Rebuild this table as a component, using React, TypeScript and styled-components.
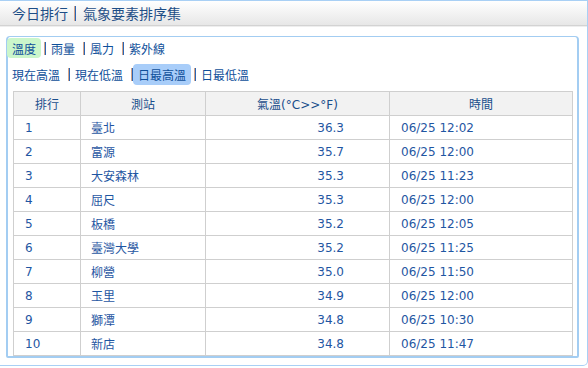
import React from 'react'
import styled, { createGlobalStyle } from 'styled-components'

const GlobalStyle = createGlobalStyle`
  html, body {
    margin: 0;
    padding: 0;
    background: #fff;
  }
  body {
    font-family: "DejaVu Sans", Verdana, "Noto Sans CJK TC", sans-serif;
    font-size: 12px;
    color: #1b4f92;
  }
`

const Frame = styled.div`
  box-sizing: border-box;
  width: 588px;
  height: 366px;
  border: 1px solid #a9d0f5;
  border-left: none;
  border-bottom-right-radius: 5px;
`

const TitleBar = styled.div`
  height: 24px;
  display: flex;
  align-items: center;
  padding-left: 12px;
  background: linear-gradient(#ffffff, #e7e7e7);
  border-bottom: 1px solid #d3d3d3;
  box-shadow: 0 1px 0 #eeeeee;
  font-size: 14px;
  color: #1d4d86;
`

const Sep = styled.span<{ $h?: number }>`
  display: inline-block;
  flex: none;
  width: 2px;
  height: ${p => p.$h ?? 13}px;
  margin-left: 3px;
  background: linear-gradient(90deg, #d6a488 50%, #2a66b5 50%);
`

const TitleSep = styled(Sep)`
  margin: 0 7px 0 6px;
`

const Panel = styled.div`
  margin: 10px 8px 0 6px;
  border: 2px solid #a3cdf2;
  border-top-width: 1px;
  border-radius: 4px 4px 2px 2px;
  padding: 0 5px 0 0;
`

const TabRow = styled.div<{ $mt: number; $h: number }>`
  display: flex;
  align-items: center;
  margin-top: ${p => p.$mt}px;
  height: ${p => p.$h}px;
  margin-left: -1px;
`

const Tab = styled.span<{ $active?: string }>`
  display: flex;
  align-items: center;
  height: 100%;
  padding: 0 5px;
  border-radius: 4px;
  background: ${p => p.$active ?? 'transparent'};
  color: #0f4f9a;
  font-size: 12px;
  white-space: nowrap;
`

const Table = styled.table`
  margin: 6px 0 0 5px;
  width: 559px;
  border-collapse: collapse;
  table-layout: fixed;
`

const Th = styled.th`
  height: 23px;
  padding: 0;
  background: #f2f2f2;
  border: 1px solid #cfcfcf;
  font-weight: normal;
  font-size: 12px;
  color: #1a4e8c;
  text-align: center;
`

const Td = styled.td<{ $align?: string; $pl?: number; $pr?: number }>`
  height: 23px;
  padding: 0 ${p => p.$pr ?? 0}px 0 ${p => p.$pl ?? 11}px;
  border: 1px solid #cfcfcf;
  text-align: ${p => p.$align ?? 'left'};
  color: #1f56a2;
  font-size: 12px;
`

const rows = [
  ['1', '臺北', '36.3', '06/25 12:02'],
  ['2', '富源', '35.7', '06/25 12:00'],
  ['3', '大安森林', '35.3', '06/25 11:23'],
  ['4', '屈尺', '35.3', '06/25 12:00'],
  ['5', '板橋', '35.2', '06/25 12:05'],
  ['6', '臺灣大學', '35.2', '06/25 11:25'],
  ['7', '柳營', '35.0', '06/25 11:50'],
  ['8', '玉里', '34.9', '06/25 12:00'],
  ['9', '獅潭', '34.8', '06/25 10:30'],
  ['10', '新店', '34.8', '06/25 11:47'],
]

const elements = ['溫度', '雨量', '風力', '紫外線']
const kinds = ['現在高溫', '現在低溫', '日最高溫', '日最低溫']

function Tabs({ items, active, color }: { items: string[]; active: number; color: string }) {
  return (
    <>
      {items.map((t, i) => (
        <React.Fragment key={t}>
          {i > 0 && <Sep />}
          <Tab $active={i === active ? color : undefined}>{t}</Tab>
        </React.Fragment>
      ))}
    </>
  )
}

export default function App() {
  return (
    <>
      <GlobalStyle />
      <Frame>
        <TitleBar>
          今日排行<TitleSep $h={15} />氣象要素排序集
        </TitleBar>
        <Panel>
          <TabRow $mt={1} $h={20}>
            <Tabs items={elements} active={0} color="#cbf6cb" />
          </TabRow>
          <TabRow $mt={6} $h={21}>
            <Tabs items={kinds} active={2} color="#a8cdf9" />
          </TabRow>
          <Table>
            <colgroup>
              <col style={{ width: 67 }} />
              <col style={{ width: 125 }} />
              <col style={{ width: 184 }} />
              <col style={{ width: 183 }} />
            </colgroup>
            <thead>
              <tr>
                <Th>排行</Th>
                <Th>測站</Th>
                <Th>氣溫(°C&gt;&gt;°F)</Th>
                <Th>時間</Th>
              </tr>
            </thead>
            <tbody>
              {rows.map(r => (
                <tr key={r[0]}>
                  <Td>{r[0]}</Td>
                  <Td $pl={10}>{r[1]}</Td>
                  <Td $align="right" $pr={45}>{r[2]}</Td>
                  <Td>{r[3]}</Td>
                </tr>
              ))}
            </tbody>
          </Table>
        </Panel>
      </Frame>
    </>
  )
}
